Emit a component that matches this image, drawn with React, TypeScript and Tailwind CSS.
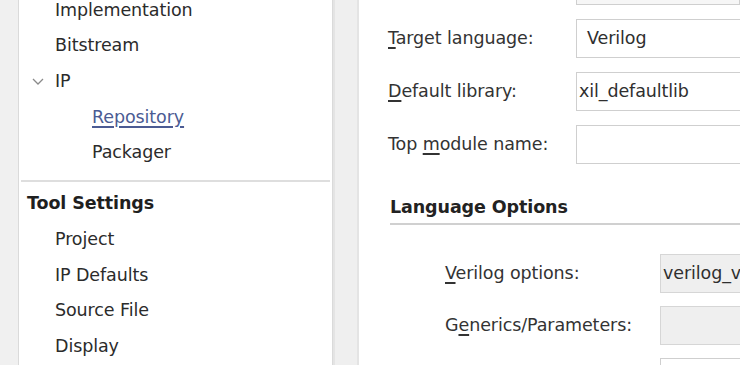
import type { ReactNode } from "react";

const Row = ({ children, className = "" }: { children: ReactNode; className?: string }) => (
  <div className={`h-[35.7px] flex items-center whitespace-nowrap ${className}`}>{children}</div>
);

const Key = ({ children }: { children: ReactNode }) => (
  <span className="underline decoration-[1.5px] underline-offset-[3px]">{children}</span>
);

function Field({ children, gray = false, pad = "pl-[2px]" }: { children?: ReactNode; gray?: boolean; pad?: string }) {
  return (
    <div
      className={`h-[39px] w-[260px] shrink-0 flex items-center border-[1.5px] ${pad} ${
        gray ? "bg-[#efefef] border-[#d6d6d6]" : "bg-white border-[#cfcfcf]"
      } text-[#2f2f2f] whitespace-nowrap`}
    >
      {children}
    </div>
  );
}

export default function App() {
  return (
    <div className="w-[740px] h-[365px] overflow-hidden bg-[#f0f0f0] flex font-['DejaVu_Sans',sans-serif] text-[17.5px] text-[#2b2b2b] tracking-[-0.1px]">
      <div className="w-[18px] shrink-0" />

      {/* tree panel */}
      <div className="w-[315px] shrink-0 bg-white border-l border-r border-[#dadada]">
        <div className="-mt-[8px]">
          <Row className="pl-[36px]">Implementation</Row>
          <Row className="pl-[36px]">Bitstream</Row>
          <Row className="pl-[13px]">
            <svg width="12" height="7" viewBox="0 0 12 7" className="mr-[11px]">
              <path d="M1 1l5 5 5-5" fill="none" stroke="#8a8a8a" strokeWidth="1.3" />
            </svg>
            IP
          </Row>
          <Row className="pl-[73px]">
            <span className="text-[#4b5b93] underline decoration-[1.5px] underline-offset-[3px]">Repository</span>
          </Row>
          <Row className="pl-[73px]">Packager</Row>
          <div className="mt-[10px] mb-[3px] mx-[2px] h-[2px] bg-[#dedede]" />
          <Row className="pl-[8px] font-bold text-[#1f1f1f]">Tool Settings</Row>
          <Row className="pl-[36px]">Project</Row>
          <Row className="pl-[36px]">IP Defaults</Row>
          <Row className="pl-[36px]">Source File</Row>
          <Row className="pl-[36px]">Display</Row>
        </div>
      </div>

      {/* splitter */}
      <div className="w-[26px] shrink-0 bg-[#efefef] border-l-2 border-r-2 border-[#e4e4e4]" />

      {/* settings form */}
      <div className="flex-1 bg-white overflow-hidden text-[#333]">
        <div className="-mt-[34px] pl-[29px] flex flex-col gap-[14px]">
          <div className="flex items-center">
            <div className="w-[188px] shrink-0" />
            <div className="h-[39px] w-[260px] border-[1.5px] border-[#cfcfcf] bg-[#f6f6f6]" />
          </div>
          <div className="flex items-center">
            <div className="w-[188px] shrink-0">
              <Key>T</Key>arget language:
            </div>
            <Field pad="pl-[10px]">Verilog</Field>
          </div>
          <div className="flex items-center">
            <div className="w-[188px] shrink-0">
              <Key>D</Key>efault library:
            </div>
            <Field>xil_defaultlib</Field>
          </div>
          <div className="flex items-center">
            <div className="w-[188px] shrink-0">
              Top <Key>m</Key>odule name:
            </div>
            <Field />
          </div>
        </div>

        <div className="ml-[31px] mt-[30px] pb-[3px] border-b-2 border-[#d0d0d0] font-bold text-[#222] leading-[26px]">
          Language Options
        </div>

        <div className="mt-[29px] pl-[86px] flex flex-col gap-[13px]">
          <div className="flex items-center">
            <div className="w-[215px] shrink-0">
              <Key>V</Key>erilog options:
            </div>
            <Field gray>verilog_v</Field>
          </div>
          <div className="flex items-center">
            <div className="w-[215px] shrink-0">
              G<Key>e</Key>nerics/Parameters:
            </div>
            <Field gray />
          </div>
          <div className="flex items-center">
            <div className="w-[215px] shrink-0" />
            <Field />
          </div>
        </div>
      </div>
    </div>
  );
}
